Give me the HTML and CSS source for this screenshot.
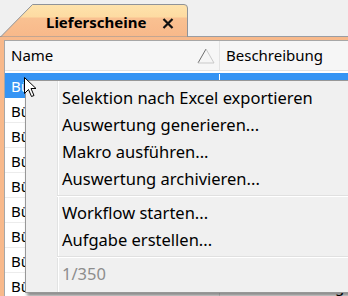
FILE: index.html
```html
<!DOCTYPE html>
<html lang="de">
<head>
    <meta charset="UTF-8">
    <title>Lieferscheine</title>
    <link rel="stylesheet" href="styles.css">
</head>
<body>
    <div class="tabstrip">
        <div class="tab">
            <svg class="tab-shape" width="190" height="33" viewBox="0 0 190 33">
                <defs>
                    <linearGradient id="tabFill" x1="0" y1="0" x2="0" y2="1">
                        <stop offset="0" stop-color="#fee3ac"/>
                        <stop offset="0.38" stop-color="#fddba2"/>
                        <stop offset="0.42" stop-color="#f9c191"/>
                        <stop offset="1" stop-color="#f8b88a"/>
                    </linearGradient>
                </defs>
                <path d="M0.5 33 L32.5 0.5 L184 0.5 Q187.5 0.5 187.5 4 L187.5 33 Z" fill="url(#tabFill)" stroke="#8f9399"/>
            </svg>
            <span class="tab-title">Lieferscheine</span>
            <svg class="tab-close" width="12" height="11" viewBox="0 0 12 11">
                <path d="M1.5 1 L10.5 10 M10.5 1 L1.5 10" stroke="#111" stroke-width="2.2"/>
            </svg>
        </div>
    </div>

    <div class="frame">
        <div class="grid">
            <div class="grid-head">
                <div class="cell cell-name">
                    Name
                    <svg class="sort" width="18" height="16" viewBox="0 0 18 16">
                        <path d="M1 15 L9 1" stroke="#6d6d6d" fill="none"/>
                        <path d="M9 1 L17 15 L1 15" stroke="#c9c9c9" fill="none"/>
                    </svg>
                </div>
                <div class="cell cell-desc">Beschreibung</div>
            </div>
            <div class="row selected"><div class="cell cell-name">Bücher</div><div class="cell cell-desc"></div></div>
            <div class="row"><div class="cell cell-name">Bücher</div><div class="cell cell-desc"></div></div>
            <div class="row"><div class="cell cell-name">Bücher</div><div class="cell cell-desc"></div></div>
            <div class="row"><div class="cell cell-name">Bücher</div><div class="cell cell-desc"></div></div>
            <div class="row"><div class="cell cell-name">Bücher</div><div class="cell cell-desc"></div></div>
            <div class="row"><div class="cell cell-name">Bücher</div><div class="cell cell-desc"></div></div>
            <div class="row"><div class="cell cell-name">Bücher</div><div class="cell cell-desc"></div></div>
            <div class="row"><div class="cell cell-name">Bücher</div><div class="cell cell-desc"></div></div>
            <div class="row"><div class="cell cell-name">Bücher Abruf</div><div class="cell cell-desc">Gesamtlieferung</div></div>
        </div>
    </div>

    <!-- Kontextmenue -->
    <div class="menu">
        <div class="menu-item">Selektion nach Excel exportieren</div>
        <div class="menu-item">Auswertung generieren...</div>
        <div class="menu-item">Makro ausführen...</div>
        <div class="menu-item">Auswertung archivieren...</div>
        <div class="menu-sep"></div>
        <div class="menu-item">Workflow starten...</div>
        <div class="menu-item">Aufgabe erstellen...</div>
        <div class="menu-sep"></div>
        <div class="menu-item disabled">1/350</div>
    </div>

    <svg class="cursor" width="13" height="21" viewBox="0 0 13 21">
        <path d="M0.5 0.5 L0.5 16.5 L4.5 12.5 L7.5 19.5 L10 18.5 L7 11.5 L12 11.5 Z" fill="#fff" stroke="#000"/>
    </svg>
</body>
</html>
```

FILE: styles.css
```css
body {
    margin: 0;
    padding: 0;
    width: 348px;
    height: 296px;
    overflow: hidden;
    background-color: #f8b98b;
    font-family: 'Noto Sans', sans-serif;
    font-size: 15px;
    color: #000;
}

/* Tab strip */
.tabstrip {
    height: 36px;
    background-color: #f0f0f0;
    border-bottom: 1px solid #9a9da3;
    display: flex;
    align-items: flex-end;
}

.tab {
    position: relative;
    width: 188px;
    height: 33px;
    margin-bottom: -1px;
    display: flex;
    align-items: center;
    padding-left: 46px;
    box-sizing: border-box;
}

.tab-shape {
    position: absolute;
    left: 0;
    top: 0;
}

.tab-title {
    position: relative;
    font-weight: bold;
    font-size: 15px;
    padding-top: 2px;
}

.tab-close {
    position: relative;
    margin-left: 16px;
    margin-top: 5px;
}

/* Grid */
.frame {
    padding: 3px 0 0 4px;
}

.grid {
    background: #fff;
    border: 1px solid #a7a7a7;
    border-right: none;
    height: 260px;
}

.grid-head {
    display: flex;
    height: 29px;
    background: #f6f6f6;
    border-bottom: 1px solid #e3e3e3;
    margin-bottom: 2px;
}

.grid-head .cell {
    line-height: 29px;
}

.cell {
    box-sizing: border-box;
    white-space: nowrap;
    overflow: hidden;
}

.cell-name {
    width: 215px;
    padding-left: 6px;
    border-right: 1px solid #e3e3e3;
    position: relative;
}

.cell-desc {
    flex: 1;
    padding-left: 6px;
}

.sort {
    position: absolute;
    left: 192px;
    top: 7px;
}

.row {
    display: flex;
    height: 25px;
    line-height: 24px;
    padding-top: 1px;
    border-bottom: 1px solid #ececec;
    box-sizing: border-box;
}

.row.selected {
    background: #3594f4;
    color: #fff;
    border-bottom-color: #3594f4;
}

.row.selected .cell-name {
    border-right-color: #fff;
}

/* Context menu */
.menu {
    position: absolute;
    left: 25px;
    top: 80px;
    width: 340px;
    height: 207px;
    padding: 3px 0 1px;
    box-sizing: content-box;
    background: #f0f0f0;
    border: 1px solid #979797;
    box-shadow: 2px 3px 3px rgba(0, 0, 0, 0.45);
    background-image: linear-gradient(to right, transparent 31px, #e2e3e3 31px, #e2e3e3 32px, #fff 32px, #fff 33px, transparent 33px);
}

.menu-item {
    height: 27px;
    line-height: 27px;
    padding-left: 36px;
    font-size: 16.5px;
}

.menu-item.disabled {
    color: #8d8d8d;
}

.menu-sep {
    height: 7px;
    margin-left: 31px;
    background: linear-gradient(to bottom, transparent 3px, #e0e0e0 3px, #e0e0e0 4px, #fff 4px, #fff 5px, transparent 5px);
}

.cursor {
    position: absolute;
    left: 24px;
    top: 77px;
}
```
